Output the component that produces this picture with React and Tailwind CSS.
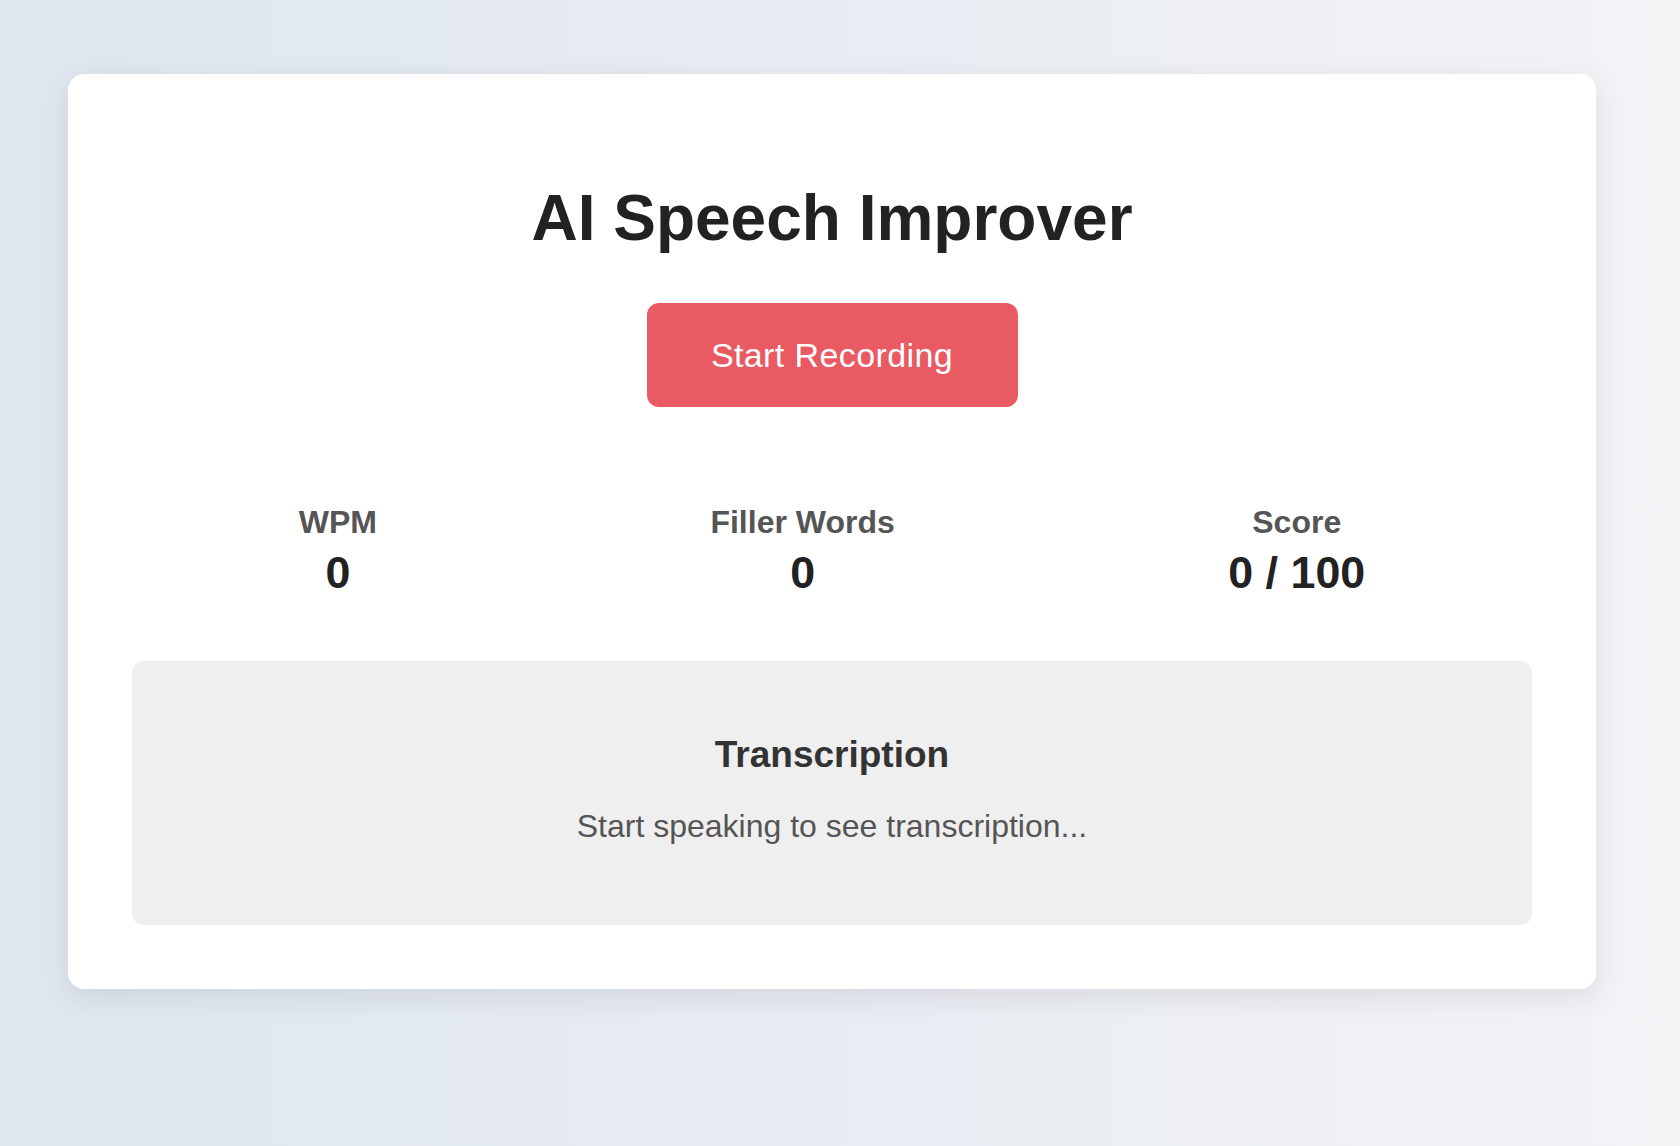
import React from 'react'

const stats = [
  { label: 'WPM', value: '0' },
  { label: 'Filler Words', value: '0' },
  { label: 'Score', value: '0 / 100' },
]

export default function App() {
  return (
    <div className="min-h-[1146px] w-full bg-gradient-to-r from-[#dfe6f0] to-[#f2f3f5] pt-[74px] pl-[68px] font-['Liberation_Sans',Arial,sans-serif]">
      {/* main card */}
      <div className="w-[1528px] rounded-[16px] bg-white px-[64px] pt-[64px] pb-[64px] shadow-[0_8px_30px_rgba(0,0,0,0.09)]">
        <h1 className="mt-[43px] text-center text-[64px] font-bold leading-[74px] text-[#222]">AI Speech Improver</h1>

        <div className="mt-[48px] flex justify-center">
          <button className="h-[104px] w-[371px] rounded-[12px] bg-[#ea5a62] text-[34px] leading-[40px] tracking-[0.4px] text-white">
            Start Recording
          </button>
        </div>

        {/* stats row */}
        <div className="mt-[97px] flex justify-around">
          {stats.map(s => (
            <div key={s.label} className="text-center">
              <div className="text-[32px] font-bold leading-[37px] text-[#555]">{s.label}</div>
              <div className="mt-[5px] text-[44.8px] font-bold leading-[52px] text-[#222]">{s.value}</div>
            </div>
          ))}
        </div>

        {/* transcription panel */}
        <div className="mt-[63px] h-[264px] rounded-[12px] bg-[#efefef] pt-[72px] text-center">
          <h3 className="text-[37px] font-bold leading-[43px] text-[#333]">Transcription</h3>
          <p className="mt-[32px] text-[32px] leading-[37px] text-[#555]">Start speaking to see transcription...</p>
        </div>
      </div>
    </div>
  )
}
